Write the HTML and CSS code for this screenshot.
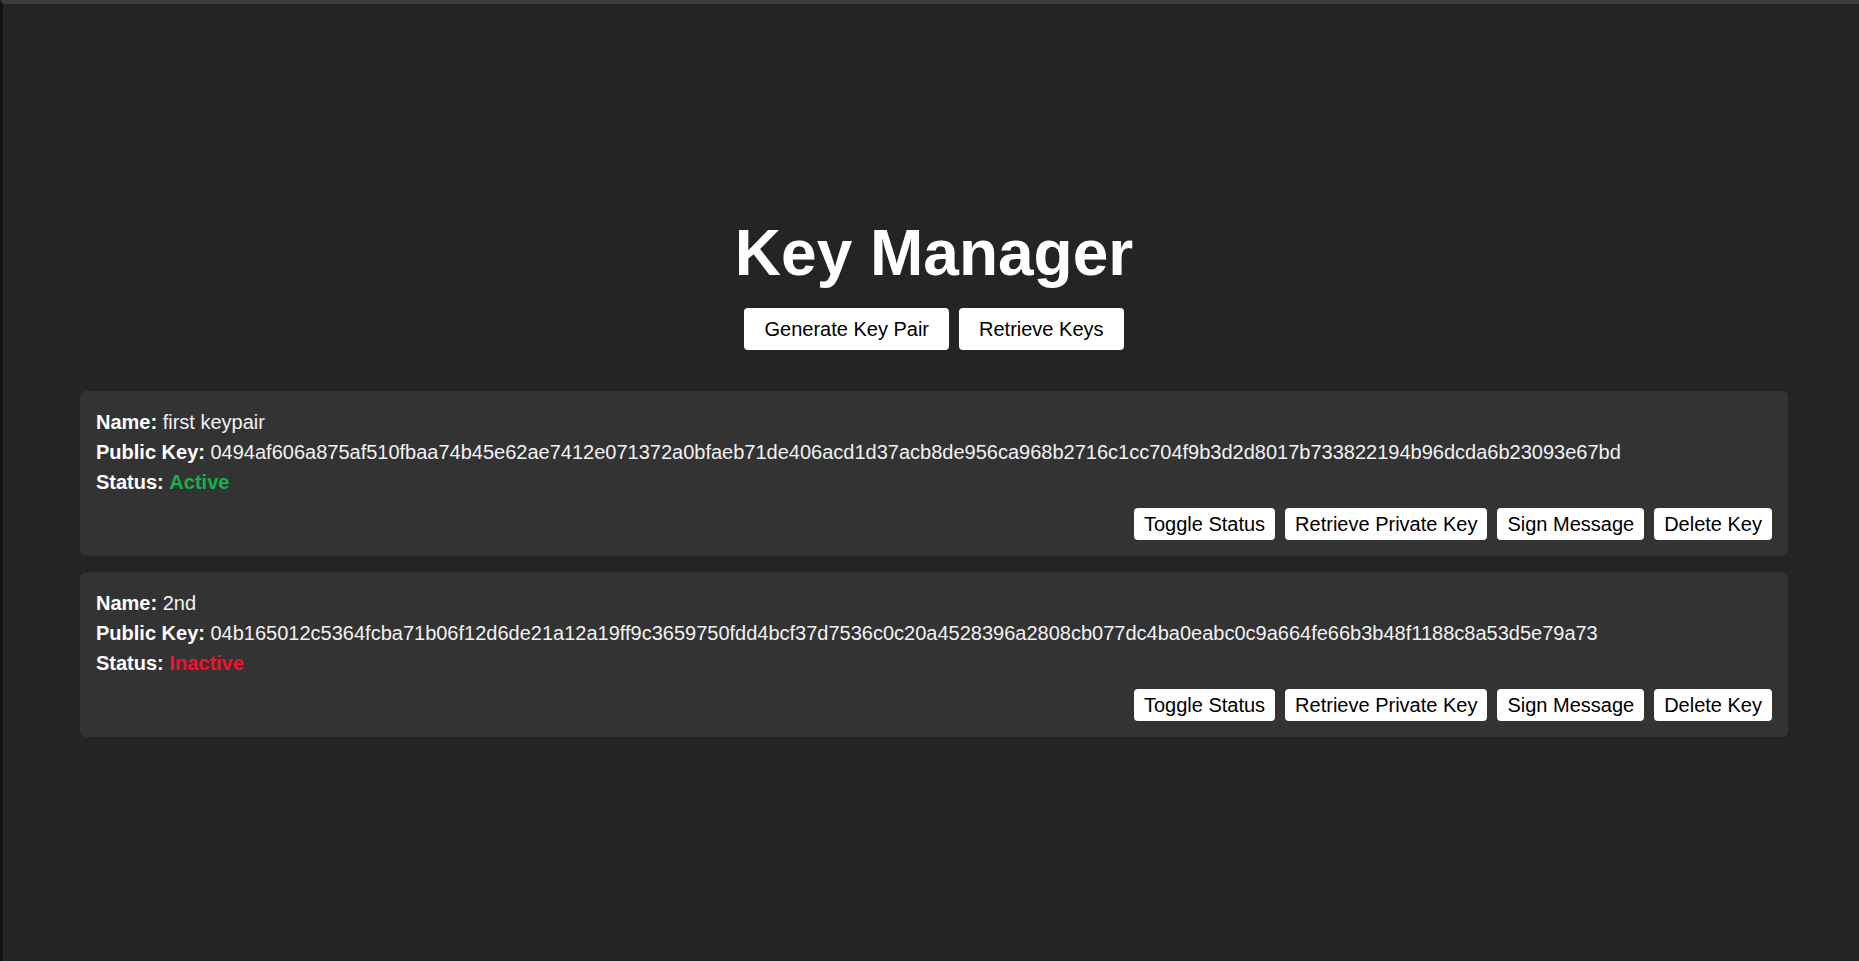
FILE: index.html
```html
<!DOCTYPE html>
<html lang="en">
<head>
<meta charset="utf-8">
<title>Key Manager</title>
<link rel="stylesheet" href="styles.css">
</head>
<body>
<div class="frame">
  <main class="app">
    <h1 class="title">Key Manager</h1>
    <div class="top-actions">
      <button class="btn btn-lg">Generate Key Pair</button>
      <button class="btn btn-lg">Retrieve Keys</button>
    </div>
    <div class="key-list">
      <div class="key-card">
        <div class="key-line"><strong>Name:</strong> first keypair</div>
        <div class="key-line"><strong>Public Key:</strong> 0494af606a875af510fbaa74b45e62ae7412e071372a0bfaeb71de406acd1d37acb8de956ca968b2716c1cc704f9b3d2d8017b733822194b96dcda6b23093e67bd</div>
        <div class="key-line"><strong>Status:</strong> <strong class="status-active">Active</strong></div>
        <div class="card-actions">
          <button class="btn btn-sm">Toggle Status</button>
          <button class="btn btn-sm">Retrieve Private Key</button>
          <button class="btn btn-sm">Sign Message</button>
          <button class="btn btn-sm">Delete Key</button>
        </div>
      </div>
      <div class="key-card">
        <div class="key-line"><strong>Name:</strong> 2nd</div>
        <div class="key-line"><strong>Public Key:</strong> 04b165012c5364fcba71b06f12d6de21a12a19ff9c3659750fdd4bcf37d7536c0c20a4528396a2808cb077dc4ba0eabc0c9a664fe66b3b48f1188c8a53d5e79a73</div>
        <div class="key-line"><strong>Status:</strong> <strong class="status-inactive">Inactive</strong></div>
        <div class="card-actions">
          <button class="btn btn-sm">Toggle Status</button>
          <button class="btn btn-sm">Retrieve Private Key</button>
          <button class="btn btn-sm">Sign Message</button>
          <button class="btn btn-sm">Delete Key</button>
        </div>
      </div>
    </div>
  </main>
</div>
</body>
</html>
```
FILE: styles.css
```css
html, body {
  margin: 0;
  padding: 0;
  background: #242424;
}

body {
  font-family: "Liberation Sans", Arial, sans-serif;
  font-size: 20px;
  line-height: 1.5;
  color: #f2f2f2;
}

.frame {
  min-height: 100vh;
  box-sizing: border-box;
  border-top: 4px solid #3d3d3d;
  border-left: 3px solid #141414;
}

.app {
  padding: 214px 71px 40px 77px;
  display: flex;
  flex-direction: column;
}

.title {
  margin: 0;
  font-size: 64px;
  line-height: 1.1;
  font-weight: 700;
  text-align: center;
  color: #ffffff;
}

.top-actions {
  margin-top: 20px;
  margin-bottom: 41px;
  display: flex;
  justify-content: center;
  gap: 10px;
}

.btn {
  font-family: "Liberation Sans", Arial, sans-serif;
  font-size: 20px;
  background: #ffffff;
  color: #000000;
  border: none;
  cursor: pointer;
}

.btn-lg {
  padding: 10px 20px;
  line-height: 22px;
  border-radius: 4px;
}

.btn-sm {
  padding: 5px 10px;
  line-height: 22px;
  border-radius: 4px;
}

.key-list {
  display: flex;
  flex-direction: column;
  gap: 16px;
}

.key-card {
  background: #333333;
  border-radius: 6px;
  padding: 16px;
  text-align: left;
}

.key-line {
  line-height: 30px;
  white-space: nowrap;
}

.key-line strong {
  color: #ffffff;
}

.key-line .status-active {
  color: #12b347;
}

.key-line .status-inactive {
  color: #f5102e;
}

.card-actions {
  margin-top: 11px;
  display: flex;
  justify-content: flex-end;
  gap: 10px;
}
```
